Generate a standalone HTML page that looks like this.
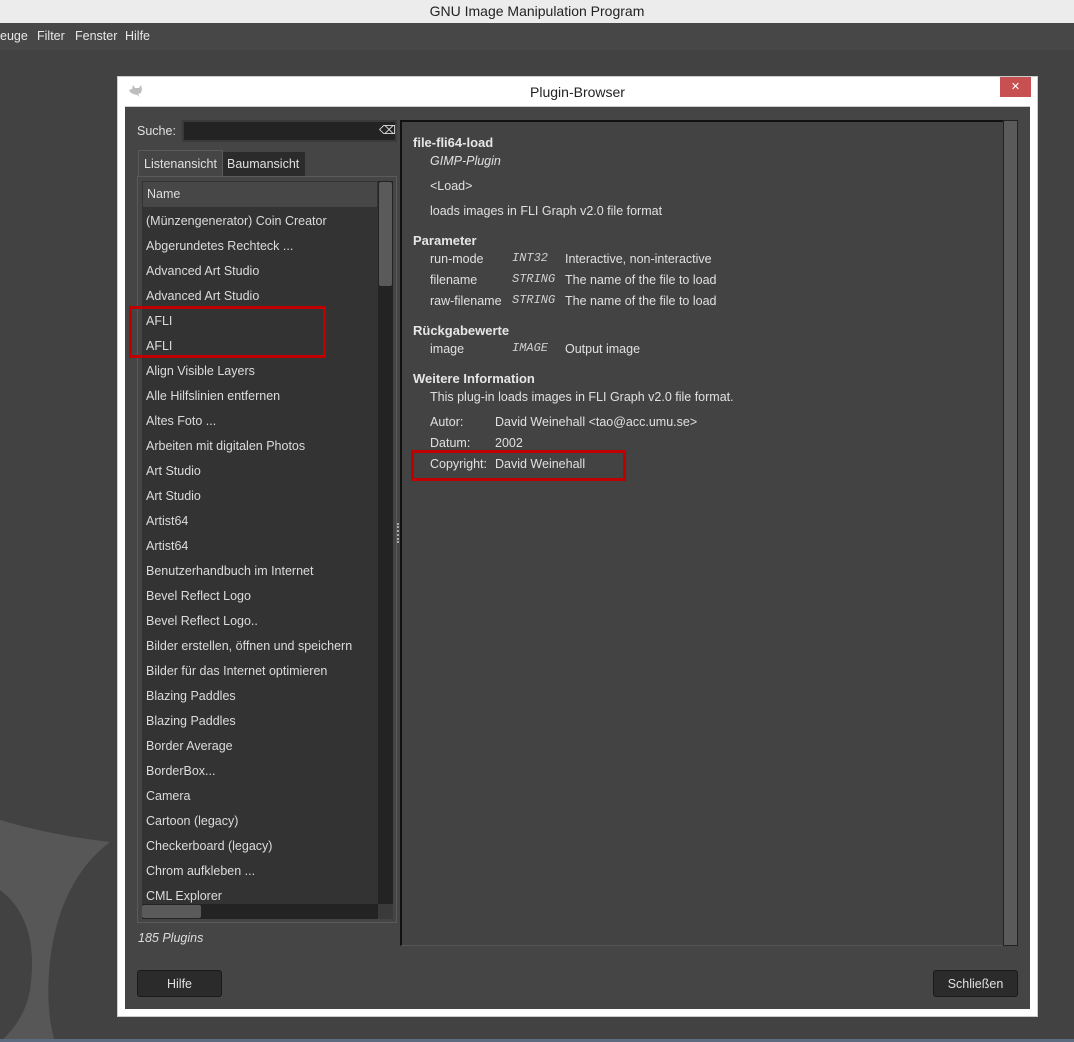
<!DOCTYPE html>
<html><head><meta charset="utf-8"><style>
*{margin:0;padding:0;box-sizing:border-box}
body{width:1074px;height:1042px;background:#454545;position:relative;overflow:hidden;font-family:"Liberation Sans","DejaVu Sans",sans-serif;font-size:12.5px;color:#e0e0e0}
.a{position:absolute;white-space:nowrap}
.row{position:absolute;left:146px;color:#dcdcdc;white-space:nowrap}
.h{font-weight:bold;color:#e6e6e6;font-size:13px}
.m{font-family:"Liberation Mono",monospace;font-style:italic;color:#d0d0d0;font-size:12px}
</style></head><body>
<div class="a" style="left:0;top:0;width:1074px;height:23px;background:#ececec;color:#222;font-size:14px;text-align:center;line-height:23px">GNU Image Manipulation Program</div>
<div class="a" style="left:0;top:23px;width:1074px;height:27px;background:#474747;line-height:27px;font-size:12.5px;color:#e8e8e8">
<span class="a" style="left:0">euge</span><span class="a" style="left:37px">Filter</span><span class="a" style="left:75px">Fenster</span><span class="a" style="left:125px">Hilfe</span></div>
<div class="a" style="left:0;top:50px;width:1074px;height:992px;background:#424242"></div>
<svg class="a" style="left:0;top:780px" width="120" height="262" viewBox="0 0 120 262"><path d="M0 40 Q50 55 110 62 Q60 100 50 180 Q45 230 55 262 L0 262 Z" fill="#575757"/><path d="M0 110 Q40 140 30 210 Q25 240 0 262 Z" fill="#424242"/></svg>
<div class="a" style="left:0;top:1039px;width:1074px;height:3px;background:#5c6b80"></div>
<div class="a" style="left:117px;top:76px;width:921px;height:941px;background:#fff;border:1px solid #ccc"></div>
<svg class="a" style="left:128px;top:84px" width="16" height="14" viewBox="0 0 16 14"><path d="M1 6 L4 5 L5 1 L7 4 L11 4 L13 1 L14 5 L13 9 L10 10 L12 13 L9 11 L5 10 L2 8 Z" fill="#bdbdbd"/></svg>
<div class="a" style="left:117px;top:80px;width:921px;text-align:center;font-size:14px;color:#222;line-height:24px">Plugin-Browser</div>
<div class="a" style="left:1000px;top:77px;width:31px;height:20px;background:#c75050;color:#fff;text-align:center;line-height:20px;font-size:11px;font-weight:bold">✕</div>
<div class="a" style="left:125px;top:106px;width:905px;height:903px;background:#454545;border-top:1px solid #ccc"></div>
<div class="a" style="left:137px;top:124px;color:#e0e0e0">Suche:</div>
<div class="a" style="left:182px;top:120px;width:215px;height:22px;background:#232323;border:2px solid #3a3a3a"></div>
<div class="a" style="left:379px;top:123px;color:#ddd;font-size:12px">⌫</div>
<div class="a" style="left:138px;top:150px;width:85px;height:26px;background:#454545;border:1px solid #5a5a5a;border-bottom:none;line-height:26px;padding-left:5px;font-size:12.5px">Listenansicht</div>
<div class="a" style="left:223px;top:152px;width:82px;height:24px;background:#2b2b2b;line-height:24px;padding-left:4px;font-size:12.5px">Baumansicht</div>
<div class="a" style="left:137px;top:176px;width:260px;height:747px;border:1px solid #5a5a5a;background:#454545"></div>
<div class="a" style="left:142px;top:181px;width:236px;height:723px;background:#333"></div>
<div class="a" style="left:143px;top:182px;width:234px;height:25px;background:#474747;line-height:25px;padding-left:4px;color:#ddd">Name</div>
<div class="a" style="left:378px;top:181px;width:15px;height:723px;background:#232323"></div>
<div class="a" style="left:379px;top:182px;width:13px;height:104px;background:#5a5a5a;border-radius:2px"></div>
<div style="position:absolute;left:0;top:214px;width:378px">
<div class="row" style="top:0">(Münzengenerator) Coin Creator</div>
<div class="row" style="top:25px">Abgerundetes Rechteck ...</div>
<div class="row" style="top:50px">Advanced Art Studio</div>
<div class="row" style="top:75px">Advanced Art Studio</div>
<div class="row" style="top:100px">AFLI</div>
<div class="row" style="top:125px">AFLI</div>
<div class="row" style="top:150px">Align Visible Layers</div>
<div class="row" style="top:175px">Alle Hilfslinien entfernen</div>
<div class="row" style="top:200px">Altes Foto ...</div>
<div class="row" style="top:225px">Arbeiten mit digitalen Photos</div>
<div class="row" style="top:250px">Art Studio</div>
<div class="row" style="top:275px">Art Studio</div>
<div class="row" style="top:300px">Artist64</div>
<div class="row" style="top:325px">Artist64</div>
<div class="row" style="top:350px">Benutzerhandbuch im Internet</div>
<div class="row" style="top:375px">Bevel Reflect Logo</div>
<div class="row" style="top:400px">Bevel Reflect Logo..</div>
<div class="row" style="top:425px">Bilder erstellen, öffnen und speichern</div>
<div class="row" style="top:450px">Bilder für das Internet optimieren</div>
<div class="row" style="top:475px">Blazing Paddles</div>
<div class="row" style="top:500px">Blazing Paddles</div>
<div class="row" style="top:525px">Border Average</div>
<div class="row" style="top:550px">BorderBox...</div>
<div class="row" style="top:575px">Camera</div>
<div class="row" style="top:600px">Cartoon (legacy)</div>
<div class="row" style="top:625px">Checkerboard (legacy)</div>
<div class="row" style="top:650px">Chrom aufkleben ...</div>
<div class="row" style="top:675px">CML Explorer</div>
</div>
<div class="a" style="left:142px;top:904px;width:236px;height:15px;background:#232323"></div>
<div class="a" style="left:142px;top:905px;width:59px;height:13px;background:#5a5a5a;border-radius:2px"></div>
<div class="a" style="left:378px;top:904px;width:15px;height:15px;background:#3a3a3a"></div>
<div class="a" style="left:129px;top:306px;width:197px;height:52px;border:3px solid #c00000"></div>
<div class="a" style="left:138px;top:931px;font-style:italic;color:#ddd">185 Plugins</div>
<div class="a" style="left:397px;top:523px;width:3px;height:20px;border-left:2px dotted #aaa"></div>
<div class="a" style="left:400px;top:120px;width:604px;height:826px;background:#434343;border-left:2px solid #111;border-top:2px solid #111;border-bottom:1px solid #555"></div>
<div class="a" style="left:1003px;top:120px;width:15px;height:826px;background:#5a5a5a;border:1px solid #222"></div>
<div class="a h" style="left:413px;top:135px">file-fli64-load</div>
<div class="a" style="left:430px;top:154px;font-style:italic">GIMP-Plugin</div>
<div class="a" style="left:430px;top:179px">&lt;Load&gt;</div>
<div class="a" style="left:430px;top:204px">loads images in FLI Graph v2.0 file format</div>
<div class="a h" style="left:413px;top:233px">Parameter</div>
<div class="a" style="left:430px;top:252px">run-mode</div><div class="a m" style="left:512px;top:251px">INT32</div><div class="a" style="left:565px;top:252px">Interactive, non-interactive</div>
<div class="a" style="left:430px;top:273px">filename</div><div class="a m" style="left:512px;top:272px">STRING</div><div class="a" style="left:565px;top:273px">The name of the file to load</div>
<div class="a" style="left:430px;top:294px">raw-filename</div><div class="a m" style="left:512px;top:293px">STRING</div><div class="a" style="left:565px;top:294px">The name of the file to load</div>
<div class="a h" style="left:413px;top:323px">Rückgabewerte</div>
<div class="a" style="left:430px;top:342px">image</div><div class="a m" style="left:512px;top:341px">IMAGE</div><div class="a" style="left:565px;top:342px">Output image</div>
<div class="a h" style="left:413px;top:371px">Weitere Information</div>
<div class="a" style="left:430px;top:390px">This plug-in loads images in FLI Graph v2.0 file format.</div>
<div class="a" style="left:430px;top:415px">Autor:</div><div class="a" style="left:495px;top:415px">David Weinehall &lt;tao@acc.umu.se&gt;</div>
<div class="a" style="left:430px;top:436px">Datum:</div><div class="a" style="left:495px;top:436px">2002</div>
<div class="a" style="left:430px;top:457px">Copyright:</div><div class="a" style="left:495px;top:457px">David Weinehall</div>
<div class="a" style="left:411px;top:450px;width:215px;height:31px;border:3px solid #c00000"></div>
<div class="a" style="left:137px;top:970px;width:85px;height:27px;background:#2b2b2b;border:1px solid #1a1a1a;border-radius:3px;text-align:center;line-height:26px;color:#e0e0e0">Hilfe</div>
<div class="a" style="left:933px;top:970px;width:85px;height:27px;background:#2b2b2b;border:1px solid #1a1a1a;border-radius:3px;text-align:center;line-height:26px;color:#e0e0e0">Schließen</div>
</body></html>
